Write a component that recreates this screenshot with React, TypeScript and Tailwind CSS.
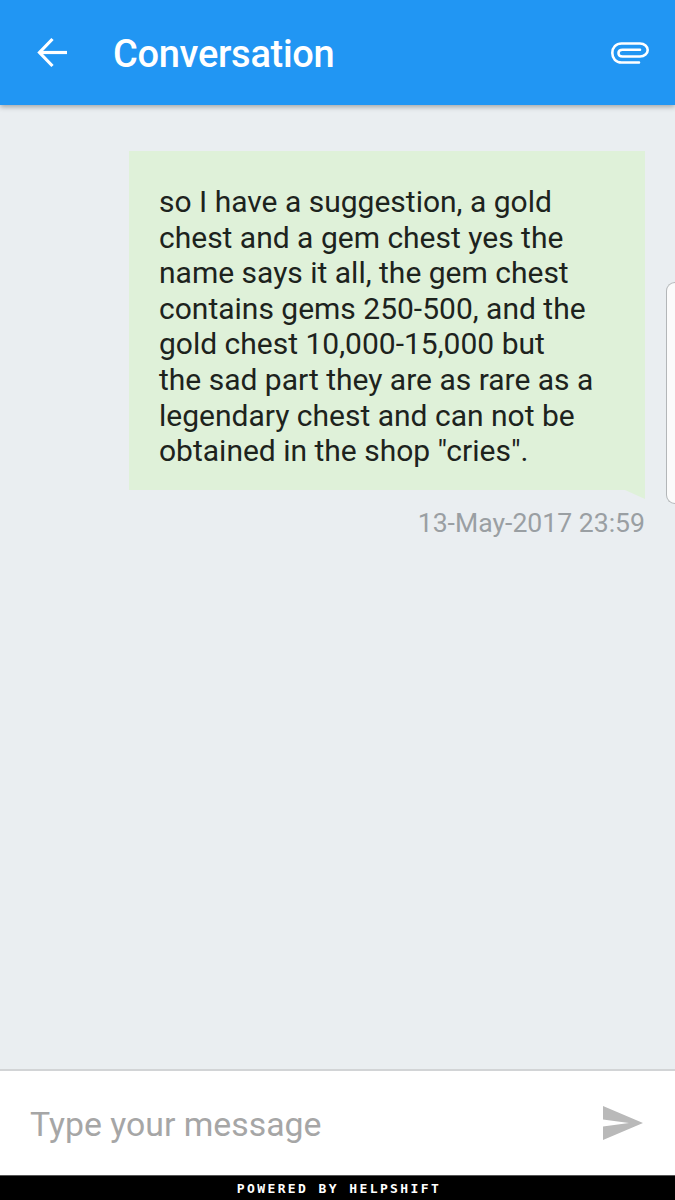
export default function App() {
  return (
    <div className="relative w-[675px] h-[1200px] flex flex-col overflow-hidden bg-[#eaeef1] font-['Roboto',sans-serif]">
      <header className="relative z-10 h-[105px] shrink-0 flex items-center bg-[#2196f3] shadow-[0_2px_5px_rgba(0,0,0,0.3)] text-white">
        <svg className="ml-[37px] w-[31px] h-[31px]" viewBox="0 0 31 31" fill="none" stroke="#fff" strokeWidth="3.2">
          <path d="M30 15.5H2.5" />
          <path d="M15.5 2 2.5 15.5 15.5 29" />
        </svg>
        <h1 className="ml-[45px] mt-[2px] text-[38px] leading-none font-medium tracking-[-0.3px]">Conversation</h1>
        <svg className="ml-auto mr-[26px] w-[38px] h-[22px]" viewBox="0 0 38 22" fill="none" stroke="#fff" strokeWidth="2.6" strokeLinecap="round">
          <path d="M28 20.5H10.5C5 20.500 1.300 16.500 1.300 11S5 1.500 10.500 1.500H29C33.500 1.500 36.700 4.500 36.700 8S33.500 14.500 29 14.500H11.500C9 14.500 7.500 13 7.500 11S9 7.700 11.500 7.700H29" />
        </svg>
      </header>

      <main className="flex-1 flex flex-col items-end pt-[46px] pr-[30px]">
        <div className="relative w-[516px] h-[339px] bg-[#dff1d9] pl-[30px] pt-[33px] text-[30px] leading-[35.6px] text-[#1d231d]">
          <p className="whitespace-pre-line">
            {'so I have a suggestion, a gold\nchest and a gem chest yes the\nname says it all, the gem chest\ncontains gems 250-500, and the\ngold chest 10,000-15,000 but\nthe sad part they are as rare as a\nlegendary chest and can not be\nobtained in the shop "cries".'}
          </p>
          <svg className="absolute right-0 top-full w-[20px] h-[9px]" viewBox="0 0 20 9">
            <polygon points="0,0 20,0 20,9" fill="#dff1d9" />
          </svg>
        </div>
        <time className="mt-[17px] text-[26.600px] leading-[32px] text-[#9a9fa3]">13-May-2017 23:59</time>
      </main>

      <div className="h-[106px] shrink-0 flex items-center border-t-2 border-[#d2d4d6] bg-white pl-[30px] pr-[32px]">
        <span className="mt-[4px] text-[33.800px] leading-none text-[#a6a6a6]">Type your message</span>
        <svg className="ml-auto w-[40px] h-[34px]" viewBox="0 0 40 34">
          <path d="M0 0 40 17 0 34V20.500L26 17 0 13.500Z" fill="#b9b9b9" />
        </svg>
      </div>

      <footer className="h-[25px] shrink-0 flex items-center justify-center bg-black border-t border-[#555] pl-[3px] text-white font-['DejaVu_Sans_Mono',monospace] font-bold text-[13px] leading-none tracking-[2.400px]">
        POWERED BY HELPSHIFT
      </footer>

      {/* edge panel handle */}
      <div className="absolute right-0 top-[282px] w-[9px] h-[222px] rounded-l-[9px] border border-r-0 border-[#b3b6b8] bg-[#fbfbfb]" />
    </div>
  );
}
